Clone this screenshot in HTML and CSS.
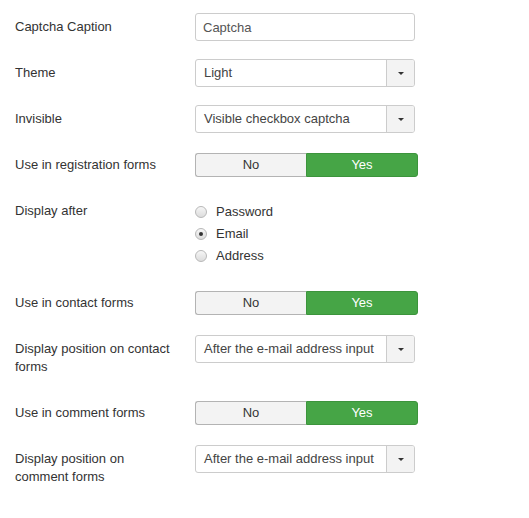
FILE: index.html
```html
<!DOCTYPE html>
<html lang="en">
<head>
    <meta charset="UTF-8">
    <meta name="viewport" content="width=device-width, initial-scale=1.0">
    <title>Captcha Options</title>
    <link rel="stylesheet" href="styles.css">
</head>
<body>
    <form class="form-horizontal">
        <div class="control-group">
            <label class="control-label">Captcha Caption</label>
            <div class="controls">
                <input class="text-input" type="text" value="Captcha">
            </div>
        </div>

        <div class="control-group">
            <label class="control-label">Theme</label>
            <div class="controls">
                <div class="chzn-select"><span>Light</span><b class="chzn-arrow"></b></div>
            </div>
        </div>

        <div class="control-group">
            <label class="control-label">Invisible</label>
            <div class="controls">
                <div class="chzn-select"><span>Visible checkbox captcha</span><b class="chzn-arrow"></b></div>
            </div>
        </div>

        <div class="control-group">
            <label class="control-label">Use in registration forms</label>
            <div class="controls">
                <div class="switcher">
                    <span class="btn">No</span>
                    <span class="btn active">Yes</span>
                </div>
            </div>
        </div>

        <div class="control-group radio-group">
            <label class="control-label">Display after</label>
            <div class="controls">
                <div class="radio-list">
                    <label class="radio"><span class="radio-dot"></span>Password</label>
                    <label class="radio"><span class="radio-dot checked"></span>Email</label>
                    <label class="radio"><span class="radio-dot"></span>Address</label>
                </div>
            </div>
        </div>

        <div class="control-group">
            <label class="control-label">Use in contact forms</label>
            <div class="controls">
                <div class="switcher">
                    <span class="btn">No</span>
                    <span class="btn active">Yes</span>
                </div>
            </div>
        </div>

        <div class="control-group">
            <label class="control-label">Display position on contact forms</label>
            <div class="controls">
                <div class="chzn-select"><span>After the e-mail address input</span><b class="chzn-arrow"></b></div>
            </div>
        </div>

        <div class="control-group">
            <label class="control-label">Use in comment forms</label>
            <div class="controls">
                <div class="switcher">
                    <span class="btn">No</span>
                    <span class="btn active">Yes</span>
                </div>
            </div>
        </div>

        <div class="control-group">
            <label class="control-label">Display position on comment forms</label>
            <div class="controls">
                <div class="chzn-select"><span>After the e-mail address input</span><b class="chzn-arrow"></b></div>
            </div>
        </div>
    </form>
</body>
</html>
```

FILE: styles.css
```css
* {
    margin: 0;
    padding: 0;
    box-sizing: border-box;
}

body {
    background: #fff;
    color: #333;
    font-family: "Liberation Sans", Arial, sans-serif;
    font-size: 13px;
    line-height: 18px;
    padding: 13px 15px;
}

.control-group {
    display: flex;
    align-items: flex-start;
    margin-bottom: 18px;
}

.control-label {
    width: 160px;
    margin-right: 20px;
    padding: 5px 0;
}

.controls {
    flex: none;
}

.text-input {
    display: block;
    width: 220px;
    height: 28px;
    padding: 4px 7px;
    border: 1px solid #ccc;
    border-radius: 3px;
    font: inherit;
    color: #555;
    background: #fff;
    outline: none;
}

/* dropdown drawn in the chosen.js style */
.chzn-select {
    display: flex;
    align-items: center;
    width: 220px;
    height: 28px;
    border: 1px solid #ccc;
    border-radius: 3px;
    background: #fff;
    color: #444;
}

.chzn-select span {
    flex: 1;
    padding-left: 8px;
    white-space: nowrap;
    overflow: hidden;
}

.chzn-arrow {
    position: relative;
    width: 28px;
    height: 100%;
    border-left: 1px solid #ccc;
    background: #f3f3f3;
    border-radius: 0 2px 2px 0;
}

.chzn-arrow::after {
    content: "";
    position: absolute;
    left: 50%;
    top: 50%;
    margin: -1px 0 0 -3px;
    border-left: 3px solid transparent;
    border-right: 3px solid transparent;
    border-top: 3px solid #333;
}

/* yes / no switch */
.switcher {
    display: flex;
    width: 223px;
    height: 24px;
    margin-top: 2px;
    margin-bottom: 2px;
}

.switcher .btn {
    flex: 1;
    text-align: center;
    line-height: 22px;
    border: 1px solid #b3b3b3;
    background: #f3f3f3;
    color: #333;
}

.switcher .btn:first-child {
    border-radius: 3px 0 0 3px;
    border-right: none;
}

.switcher .btn.active {
    background: #46a546;
    border-color: #3c943c;
    color: #fff;
    border-radius: 0 3px 3px 0;
}

.radio-list {
    padding: 4px 0;
}

.radio {
    display: flex;
    align-items: center;
    height: 22px;
}

.radio-dot {
    position: relative;
    width: 12px;
    height: 12px;
    margin: 0 9px 0 0;
    border: 1px solid #b8b8b8;
    border-radius: 50%;
    background: linear-gradient(#f6f6f6, #dcdcdc);
}

.radio-dot.checked::after {
    content: "";
    position: absolute;
    left: 3px;
    top: 3px;
    width: 4px;
    height: 4px;
    border-radius: 50%;
    background: #333;
}
```
